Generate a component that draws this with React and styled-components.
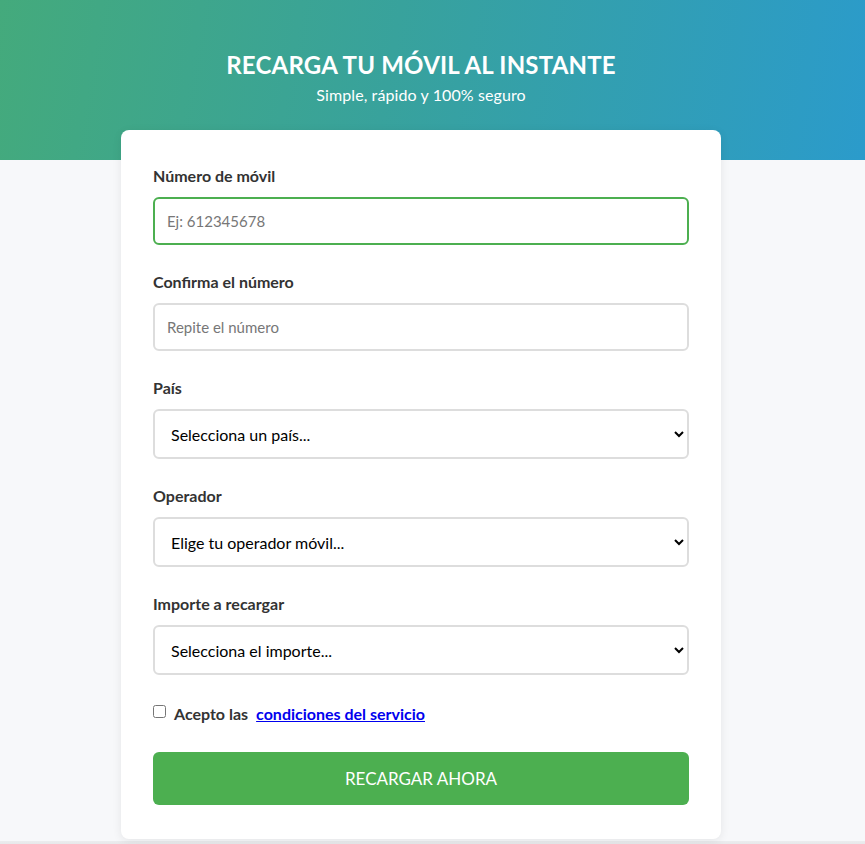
import React from 'react'
import styled, { createGlobalStyle } from 'styled-components'

const GlobalStyle = createGlobalStyle`
  html, body {
    margin: 0;
    padding: 0;
    background: #f7f8fa;
    font-family: Lato, "Open Sans", sans-serif;
    color: #333;
  }
`

const Page = styled.div`
  min-height: 844px;
  display: flex;
  flex-direction: column;
`

const Header = styled.header`
  height: 160px;
  box-sizing: border-box;
  padding: 49px 23px 0 0;
  text-align: center;
  color: #fff;
  background: linear-gradient(100deg, #44aa7c 0%, #38a29c 45%, #2b9bcb 100%);
`

const Title = styled.h1`
  margin: 0;
  font-size: 24px;
  line-height: 32px;
  font-weight: 700;
  letter-spacing: 0.2px;
`

const Subtitle = styled.p`
  margin: 3px 0 0;
  font-size: 16px;
  line-height: 22px;
  letter-spacing: 0.1px;
`

const Main = styled.main`
  padding-right: 23px;
  margin-top: -30px;
  position: relative;
`

const Card = styled.form`
  width: 600px;
  box-sizing: border-box;
  margin: 0 auto;
  padding: 34px 32px 34px;
  background: #fff;
  border-radius: 8px;
  box-shadow: 0 2px 10px rgba(0, 0, 0, 0.08);
`

const Field = styled.div`
  margin-bottom: 25px;
`

const Label = styled.label`
  display: block;
  font-size: 16px;
  line-height: 24px;
  font-weight: 700;
  color: #333;
  margin-bottom: 9px;
`

const Input = styled.input`
  display: block;
  width: 100%;
  height: 48px;
  box-sizing: border-box;
  padding: 0 12px;
  font-family: inherit;
  font-size: 15px;
  color: #333;
  border: 2px solid ${p => (p.$active ? '#4caf50' : '#ddd')};
  border-radius: 6px;
  outline: none;

  &::placeholder {
    color: #777;
  }
`

const Select = styled.select`
  display: block;
  width: 100%;
  height: 50px;
  box-sizing: border-box;
  padding: 0 12px;
  font-family: inherit;
  font-size: 16px;
  color: #000;
  background: #fff;
  border: 2px solid #ddd;
  border-radius: 6px;
  outline: none;
`

const CheckRow = styled.div`
  display: flex;
  align-items: center;
  gap: 8px;
  padding-top: 2px;
  font-size: 16px;
  line-height: 24px;
  font-weight: 700;
  color: #333;
`

const Check = styled.input`
  margin: 0;
  width: 13px;
  height: 13px;
  align-self: flex-start;
  margin-top: 3px;
`

const Terms = styled.a`
  color: #0000ee;
  text-decoration: underline;
`

const Button = styled.button`
  display: block;
  width: 100%;
  height: 53px;
  margin-top: 26px;
  border: none;
  border-radius: 6px;
  background: #4caf50;
  color: #fff;
  font-family: inherit;
  font-size: 17px;
  text-transform: uppercase;
  cursor: pointer;
`

const Footer = styled.div`
  margin-top: 2px;
  flex: 1;
  min-height: 6px;
  background: linear-gradient(#ecedef, #e3e4e6);
`

export default function App() {
  return (
    <Page>
      <GlobalStyle />
      <Header>
        <Title>RECARGA TU MÓVIL AL INSTANTE</Title>
        <Subtitle>Simple, rápido y 100% seguro</Subtitle>
      </Header>
      <Main>
        <Card onSubmit={e => e.preventDefault()}>
          <Field>
            <Label htmlFor="numero">Número de móvil</Label>
            <Input id="numero" $active placeholder="Ej: 612345678" />
          </Field>
          <Field>
            <Label htmlFor="confirma">Confirma el número</Label>
            <Input id="confirma" placeholder="Repite el número" />
          </Field>
          <Field>
            <Label htmlFor="pais">País</Label>
            <Select id="pais" defaultValue="">
              <option value="">Selecciona un país...</option>
            </Select>
          </Field>
          <Field>
            <Label htmlFor="operador">Operador</Label>
            <Select id="operador" defaultValue="">
              <option value="">Elige tu operador móvil...</option>
            </Select>
          </Field>
          <Field>
            <Label htmlFor="importe">Importe a recargar</Label>
            <Select id="importe" defaultValue="">
              <option value="">Selecciona el importe...</option>
            </Select>
          </Field>
          <CheckRow>
            <Check type="checkbox" id="acepto" />
            <span>Acepto las</span>
            <Terms href="#">condiciones del servicio</Terms>
          </CheckRow>
          <Button type="submit">Recargar ahora</Button>
        </Card>
      </Main>
      <Footer />
    </Page>
  )
}
